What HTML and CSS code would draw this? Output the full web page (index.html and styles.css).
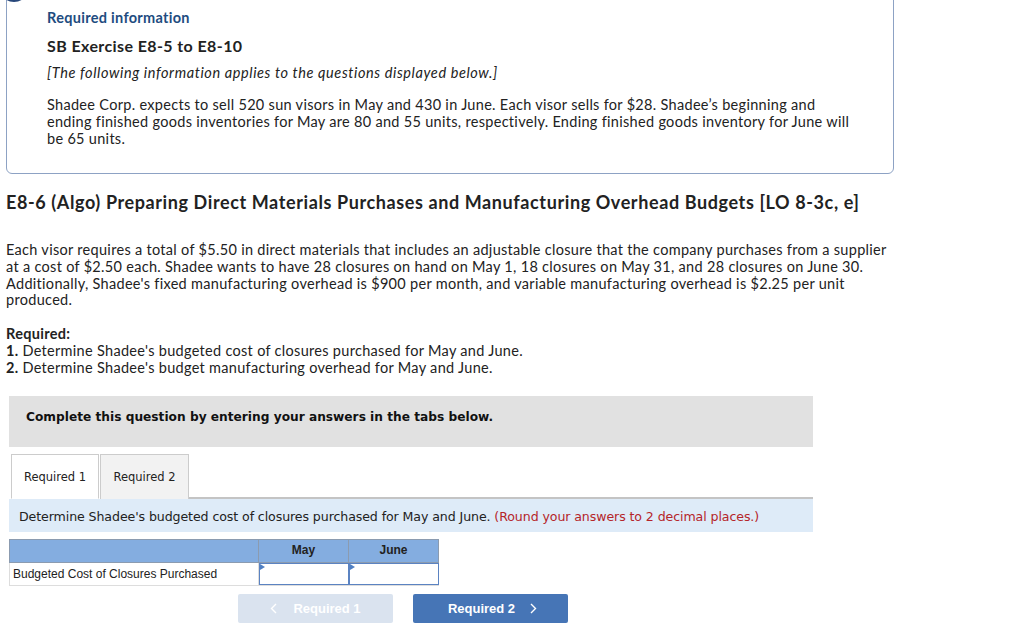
FILE: index.html
```html
<!DOCTYPE html>
<html>
<head>
<meta charset="utf-8">
<link rel="stylesheet" href="styles.css">
</head>
<body>
<div class="page">
  <div class="info">
    <span class="info-dot"></span>
    <div class="info-title">Required information</div>
    <div class="info-sub">SB Exercise E8-5 to E8-10</div>
    <div class="info-note">[The following information applies to the questions displayed below.]</div>
    <p class="info-text">Shadee Corp. expects to sell 520 sun visors in May and 430 in June. Each visor sells for $28. Shadee’s beginning and ending finished goods inventories for May are 80 and 55 units, respectively. Ending finished goods inventory for June will be 65 units.</p>
  </div>

  <h1 class="q-title">E8-6 (Algo) Preparing Direct Materials Purchases and Manufacturing Overhead Budgets [LO 8-3c, e]</h1>

  <p class="q-text">Each visor requires a total of $5.50 in direct materials that includes an adjustable closure that the company purchases from a supplier at a cost of $2.50 each. Shadee wants to have 28 closures on hand on May 1, 18 closures on May 31, and 28 closures on June 30. Additionally, Shadee's fixed manufacturing overhead is $900 per month, and variable manufacturing overhead is $2.25 per unit produced.</p>

  <div class="req">
    <div class="req-head">Required:</div>
    <div><b>1.</b> Determine Shadee's budgeted cost of closures purchased for May and June.</div>
    <div><b>2.</b> Determine Shadee's budget manufacturing overhead for May and June.</div>
  </div>

  <div class="work">
    <div class="complete">Complete this question by entering your answers in the tabs below.</div>
    <div class="tabs">
      <div class="tab active">Required 1</div>
      <div class="tab">Required 2</div>
      <div class="tab-rest"></div>
    </div>
    <div class="instr">Determine Shadee's budgeted cost of closures purchased for May and June. <span class="round">(Round your answers to 2 decimal places.)</span></div>

    <table class="grid">
      <tr class="head">
        <th class="c-label"></th>
        <th class="c-val">May</th>
        <th class="c-val">June</th>
      </tr>
      <tr>
        <td class="c-label">Budgeted Cost of Closures Purchased</td>
        <td class="c-in"><div class="inbox"><span class="flag"></span></div></td>
        <td class="c-in"><div class="inbox"><span class="flag"></span></div></td>
      </tr>
    </table>

    <div class="nav">
      <div class="btn disabled"><svg class="chev" width="7" height="11" viewBox="0 0 7 11"><polyline points="6,1 1.5,5.5 6,10" fill="none" stroke="currentColor" stroke-width="1.4"/></svg><span>Required 1</span></div>
      <div class="btn primary"><span>Required 2</span><svg class="chev" width="7" height="11" viewBox="0 0 7 11"><polyline points="1,1 5.5,5.5 1,10" fill="none" stroke="currentColor" stroke-width="1.4"/></svg></div>
    </div>
  </div>
</div>
</body>
</html>
```

FILE: styles.css
```css
* { box-sizing: border-box; }
html, body { margin: 0; padding: 0; background: #fff; }
body {
  font-family: "Lato", "Open Sans", Arial, sans-serif;
  color: #222;
}
.page {
  width: 1024px;
  height: 638px;
  overflow: hidden;
  padding: 0 0 0 6px;
}
.info {
  position: relative;
  width: 888px;
  margin-top: -20px;
  border: 1px solid #8da2c4;
  border-radius: 0 0 6px 6px;
  padding: 28px 40px 26px 40px;
}
.info-dot {
  position: absolute;
  left: -8px;
  top: -9px;
  width: 30px;
  height: 30px;
  border-radius: 50%;
  background: #27477a;
}
.info-title {
  font-size: 14.5px;
  font-weight: 700;
  color: #1e4c80;
  line-height: 18px;
  letter-spacing: 0.3px;
}
.info-sub {
  margin-top: 9px;
  font-size: 16px;
  font-weight: 700;
  color: #222;
  line-height: 20px;
  letter-spacing: 0.4px;
}
.info-note {
  margin-top: 8px;
  font-size: 14.5px;
  font-style: italic;
  line-height: 18px;
  letter-spacing: 0.6px;
}
.info-text {
  margin: 14px 0 0 0;
  font-size: 14.5px;
  line-height: 17px;
  letter-spacing: 0.3px;
  width: 815px;
}
.q-title {
  margin: 16px 0 0 0;
  font-size: 18px;
  font-weight: 700;
  line-height: 24px;
  letter-spacing: 0.6px;
}
.q-text {
  margin: 28px 0 0 0;
  font-size: 14.5px;
  line-height: 16.8px;
  letter-spacing: 0.3px;
  width: 888px;
}
.req {
  margin-top: 16px;
  font-size: 14.5px;
  line-height: 17px;
  letter-spacing: 0.3px;
}
.req-head { font-weight: 700; }
.work {
  margin-top: 20px;
  margin-left: 3px;
  width: 804px;
  font-family: Verdana, "DejaVu Sans", sans-serif;
}
.complete {
  height: 51px;
  background: #e1e1e1;
  padding: 14px 17px 0 17px;
  font-size: 12.2px;
  font-weight: 700;
  color: #111;
  font-family: "DejaVu Sans", Verdana, sans-serif;
}
.tabs {
  display: flex;
  margin-top: 7px;
  height: 45px;
  align-items: stretch;
}
.tab {
  width: 89px;
  border: 1px solid #ccc;
  border-bottom: none;
  background: #f2f2f2;
  font-family: "DejaVu Sans", Verdana, sans-serif;
  font-size: 11.5px;
  color: #222;
  display: flex;
  align-items: center;
  justify-content: center;
}
.tab.active {
  margin-left: 2px;
  width: 88px;
  background: #fff;
  border-bottom: 1px solid #fff;
  margin-right: 1px;
}
.tab-rest {
  flex: 1;
  border-bottom: 2px solid #c4c4c4;
}
.instr {
  height: 33px;
  background: #deebf8;
  padding: 10px 10px 0 10px;
  font-family: "DejaVu Sans", Verdana, sans-serif;
  font-size: 12.6px;
  color: #222;
  letter-spacing: -0.1px;
}
.round { color: #b5252a; }
.grid {
  margin-top: 7px;
  border-collapse: collapse;
  font-family: "Liberation Sans", Arial, sans-serif;
  font-size: 12px;
}
.grid th, .grid td { padding: 0; }
.grid .head th {
  background: #84ade0;
  height: 23px;
  border: 1px solid #8b9bb0;
  font-weight: 700;
  color: #222;
  text-align: center;
  vertical-align: top;
  padding-top: 3px;
}
.c-label { width: 249px; }
.c-val { width: 90px; }
.grid td.c-label {
  height: 23px;
  border: 1px solid #ddd;
  border-top: none;
  padding-left: 3px;
  color: #222;
  vertical-align: middle;
}
.grid td.c-in {
  height: 23px;
  padding: 0;
  border-bottom: 1px solid #ddd;
}
.inbox {
  position: relative;
  height: 22px;
  border: 1px solid #5b83c2;
}
.flag {
  position: absolute;
  left: 0;
  top: 0;
  width: 0;
  height: 0;
  border-top: 3px solid transparent;
  border-bottom: 3px solid transparent;
  border-left: 5px solid #4f7fc3;
}
.nav {
  display: flex;
  gap: 20px;
  margin-top: 8px;
  margin-left: 229px;
}
.btn {
  width: 155px;
  height: 29px;
  border-radius: 2px;
  font-family: "Liberation Sans", Arial, sans-serif;
  font-size: 13px;
  font-weight: 700;
  display: flex;
  align-items: center;
  justify-content: center;
  gap: 15px;
}
.btn .chev { display: block; }
.btn.disabled { background: #dae3ef; color: #fff; gap: 16px; }
.btn.primary { background: #4675b6; color: #fff; padding-left: 4px; }
```
